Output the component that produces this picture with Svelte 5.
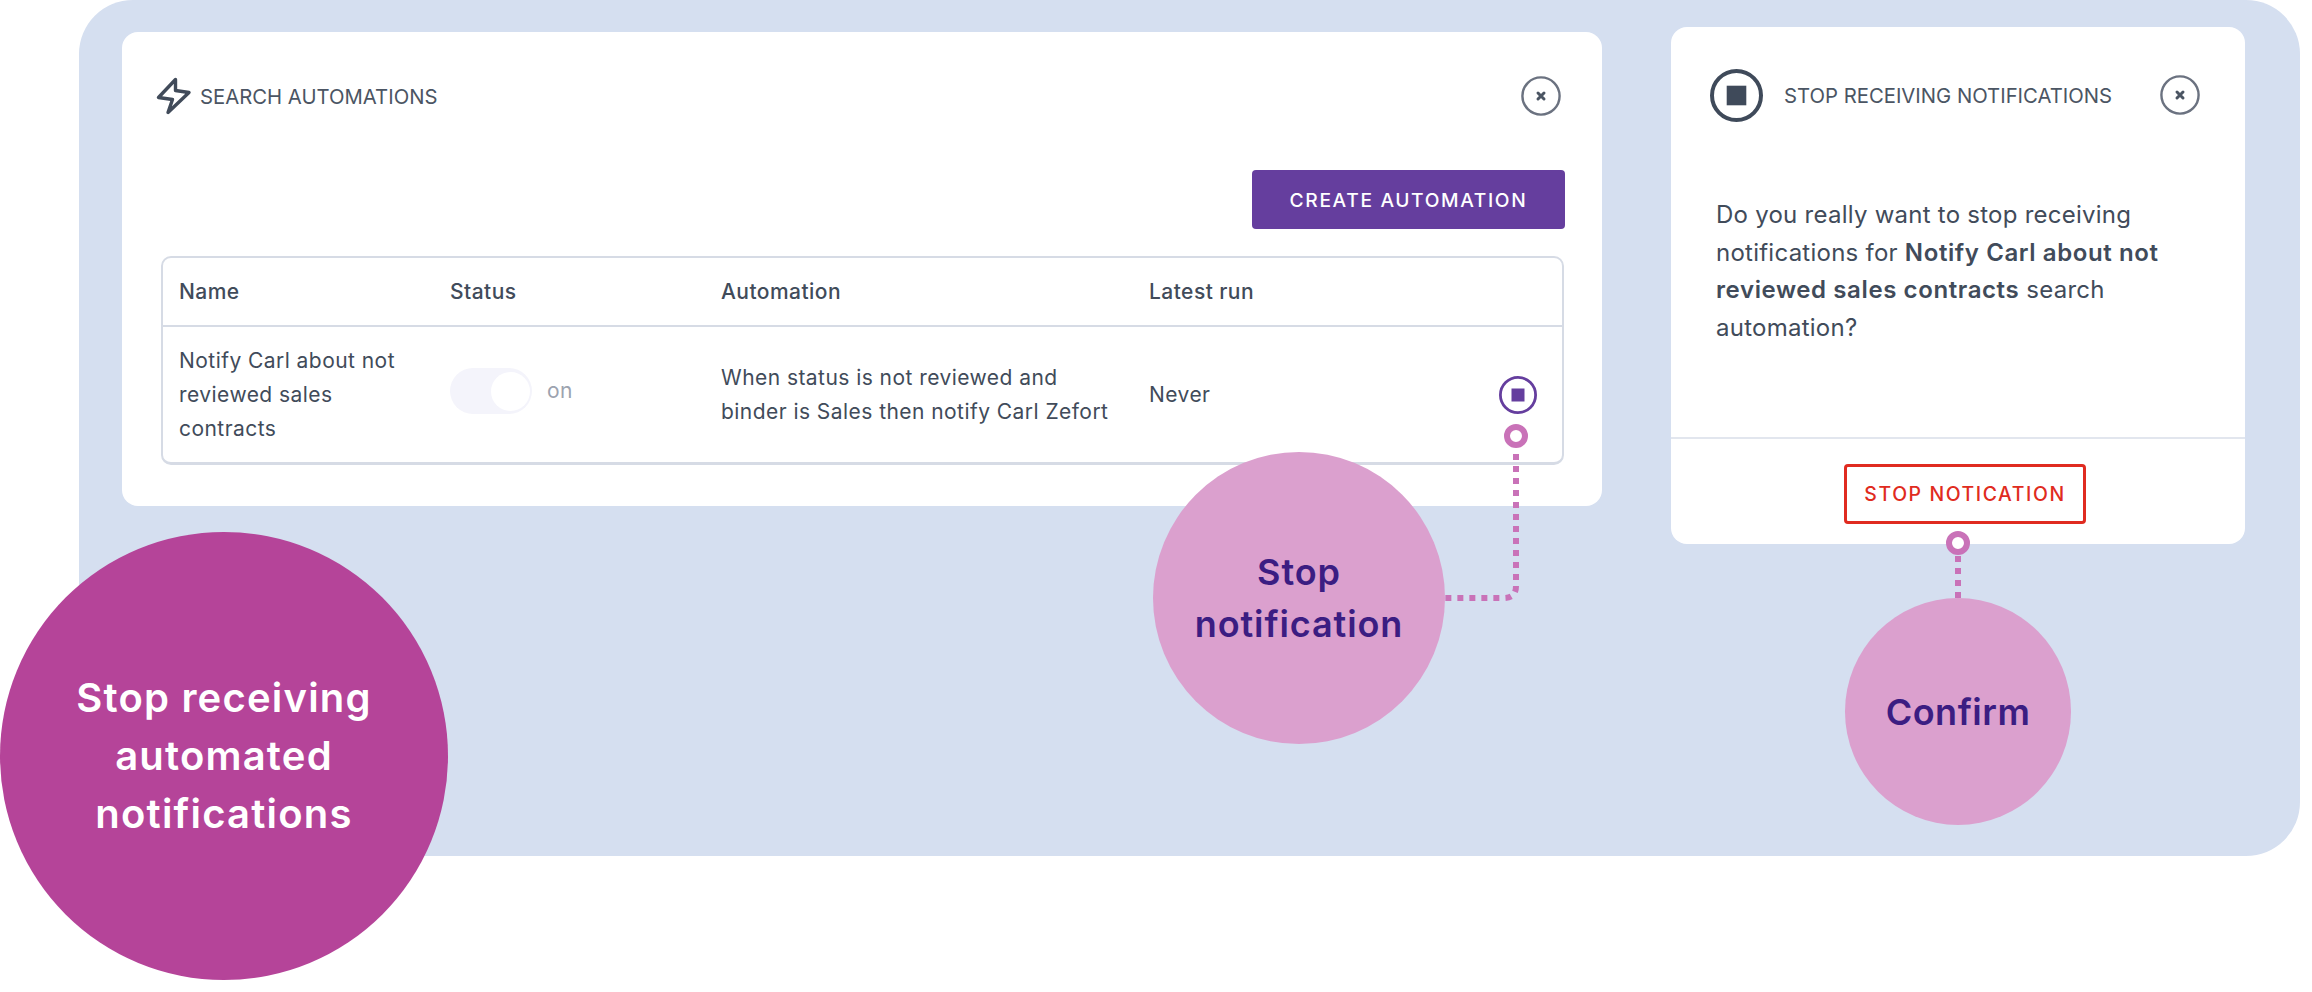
<script lang="ts">
	const columns = ['Name', 'Status', 'Automation', 'Latest run', ''];
</script>

{#snippet closeButton()}
	<button class="close" aria-label="Close">
		<svg width="40" height="40" viewBox="0 0 40 40">
			<circle cx="20" cy="20" r="18.6" fill="none" stroke="#6b7280" stroke-width="2.4" />
			<path d="M17 17l6 6M23 17l-6 6" stroke="#4b5563" stroke-width="3" stroke-linecap="round" />
		</svg>
	</button>
{/snippet}

<div class="page">
	<div class="panel">
		<section class="card automations">
			<header class="head">
				<svg class="bolt" width="36" height="38" viewBox="0 0 36 38">
					<path
						d="M19.5 2.5 2.5 20.5 16.5 22.5 12 35.5 33 15.5 19.5 13.5Z"
						fill="none"
						stroke="#414b5a"
						stroke-width="3.4"
						stroke-linejoin="round"
					/>
				</svg>
				<h2>SEARCH AUTOMATIONS</h2>
				{@render closeButton()}
			</header>

			<div class="toolbar">
				<button class="create">CREATE AUTOMATION</button>
			</div>

			<div class="table">
				<div class="row header">
					{#each columns as col}
						<div>{col}</div>
					{/each}
				</div>
				<div class="row body">
					<div class="name">Notify Carl about not reviewed sales contracts</div>
					<div class="status">
						<span class="toggle"><span class="knob"></span></span>
						<span class="on">on</span>
					</div>
					<div class="rule">When status is not reviewed and binder is Sales then notify Carl Zefort</div>
					<div>Never</div>
					<div class="action">
						<svg width="38" height="38" viewBox="0 0 38 38">
							<circle cx="19" cy="19" r="17.6" fill="none" stroke="#653e9e" stroke-width="2.8" />
							<rect x="12.5" y="12.5" width="13" height="13" fill="#653e9e" />
						</svg>
					</div>
				</div>
			</div>
		</section>

		<section class="card confirm">
			<header class="head">
				<svg width="53" height="53" viewBox="0 0 53 53">
					<circle cx="26.5" cy="26.5" r="24.5" fill="none" stroke="#3f4a5a" stroke-width="4" />
					<rect x="16.7" y="16.7" width="19.6" height="19.6" fill="#3f4a5a" />
				</svg>
				<h2>STOP RECEIVING NOTIFICATIONS</h2>
				{@render closeButton()}
			</header>
			<p>
				Do you really want to stop receiving notifications for
				<strong>Notify Carl about not reviewed sales contracts</strong> search automation?
			</p>
			<footer>
				<button class="stop">STOP NOTICATION</button>
			</footer>
		</section>
	</div>

	<svg class="wires" width="2312" height="992" viewBox="0 0 2312 992">
		<path class="dots" d="M1516 454V586Q1516 598 1504 598H1445" />
		<path class="dots" d="M1958 556V598" />
		<circle class="ring" cx="1516" cy="436" r="9" />
		<circle class="ring" cx="1958" cy="543" r="9" />
	</svg>

	<div class="bubble big">Stop receiving<br />automated<br />notifications</div>
	<div class="bubble stop-note">Stop<br />notification</div>
	<div class="bubble confirm-note">Confirm</div>
</div>

<style>
	:global(body) {
		margin: 0;
		background: #fff;
	}

	.page {
		position: relative;
		width: 2312px;
		height: 992px;
		overflow: hidden;
		font-family: Inter, 'Liberation Sans', sans-serif;
		color: #414b5a;
	}

	.panel {
		display: flex;
		align-items: flex-start;
		gap: 69px;
		box-sizing: border-box;
		width: 2221px;
		height: 856px;
		margin-left: 79px;
		padding: 27px 0 0 43px;
		background: #d5dff0;
		border-radius: 54px;
	}

	.card {
		background: #fff;
		border-radius: 16px;
		box-sizing: border-box;
	}

	.automations {
		width: 1480px;
		margin-top: 5px;
		padding: 40px 38px 41px 39px;
	}

	.confirm {
		width: 574px;
		padding-top: 41px;
	}

	.head {
		display: flex;
		align-items: center;
	}

	.automations .head {
		height: 48px;
		margin: 0 3px 0 -5px;
		gap: 8px;
	}

	.confirm .head {
		height: 54px;
		padding: 0 45px 0 39px;
		gap: 21px;
	}

	h2 {
		flex: 1;
		margin: 0;
		font-size: 20.3px;
		font-weight: 400;
		color: #4b5563;
		white-space: nowrap;
	}

	.close {
		display: block;
		width: 40px;
		height: 40px;
		padding: 0;
		border: 0;
		background: none;
	}

	.close svg {
		display: block;
	}

	.toolbar {
		display: flex;
		justify-content: flex-end;
		margin: 50px -1px 27px 0;
	}

	button {
		font-family: inherit;
	}

	.create {
		width: 313px;
		height: 59px;
		border: 0;
		border-radius: 4px;
		background: #653e9e;
		color: #fff;
		font-size: 19.2px;
		font-weight: 500;
		letter-spacing: 1.65px;
	}

	.table {
		border: 2px solid #d6dbe5;
		border-bottom-width: 3px;
		border-radius: 10px;
		font-size: 21px;
		letter-spacing: 0.45px;
	}

	.row {
		display: grid;
		grid-template-columns: 271px 271px 428px 1fr 38px;
		align-items: center;
		padding: 0 25px 0 16px;
	}

	.header {
		height: 67px;
		border-bottom: 2px solid #d6dbe5;
		font-weight: 500;
	}

	.body {
		height: 135px;
		line-height: 34px;
	}

	.name {
		width: 240px;
	}

	.status {
		display: flex;
		align-items: center;
		gap: 15px;
		margin-bottom: 7px;
	}

	.toggle {
		display: flex;
		align-items: center;
		justify-content: flex-end;
		box-sizing: border-box;
		width: 82px;
		height: 46px;
		padding-right: 2px;
		border-radius: 23px;
		background: #f4f4fb;
	}

	.knob {
		width: 39px;
		height: 39px;
		border-radius: 50%;
		background: #fff;
	}

	.on {
		color: #9ca3af;
	}

	.rule {
		width: 400px;
	}

	.action svg {
		display: block;
	}

	.confirm p {
		margin: 0;
		padding: 74px 45px 91px;
		font-size: 24px;
		line-height: 37.6px;
		letter-spacing: 0.25px;
	}

	.confirm strong {
		font-weight: 600;
		letter-spacing: 0.6px;
	}

	footer {
		display: flex;
		justify-content: center;
		padding: 25px 0 20px;
		border-top: 2px solid #e2e6ee;
	}

	.stop {
		box-sizing: border-box;
		width: 242px;
		height: 60px;
		margin-left: 14px;
		border: 3px solid #e02b20;
		border-radius: 4px;
		background: #fff;
		color: #e02b20;
		font-size: 19.4px;
		font-weight: 500;
		letter-spacing: 1.6px;
	}

	.wires {
		position: absolute;
		left: 0;
		top: 0;
	}

	.dots {
		fill: none;
		stroke: #c972b8;
		stroke-width: 6;
		stroke-dasharray: 6 6;
	}

	.ring {
		fill: #fff;
		stroke: #c972b8;
		stroke-width: 6;
	}

	.bubble {
		position: absolute;
		display: flex;
		align-items: center;
		justify-content: center;
		border-radius: 50%;
		text-align: center;
		font-weight: 600;
	}

	.big {
		left: 0;
		top: 532px;
		width: 448px;
		height: 448px;
		background: #b54499;
		color: #fff;
		font-size: 40px;
		line-height: 58px;
		letter-spacing: 1.2px;
	}

	.stop-note {
		left: 1153px;
		top: 452px;
		width: 292px;
		height: 292px;
		background: #dba0ce;
		color: #3b1d82;
		font-size: 36px;
		line-height: 52px;
		letter-spacing: 0.9px;
	}

	.confirm-note {
		left: 1845px;
		top: 598px;
		width: 226px;
		height: 227px;
		background: #dba0ce;
		color: #3b1d82;
		font-size: 36px;
		letter-spacing: 0.5px;
	}
</style>
